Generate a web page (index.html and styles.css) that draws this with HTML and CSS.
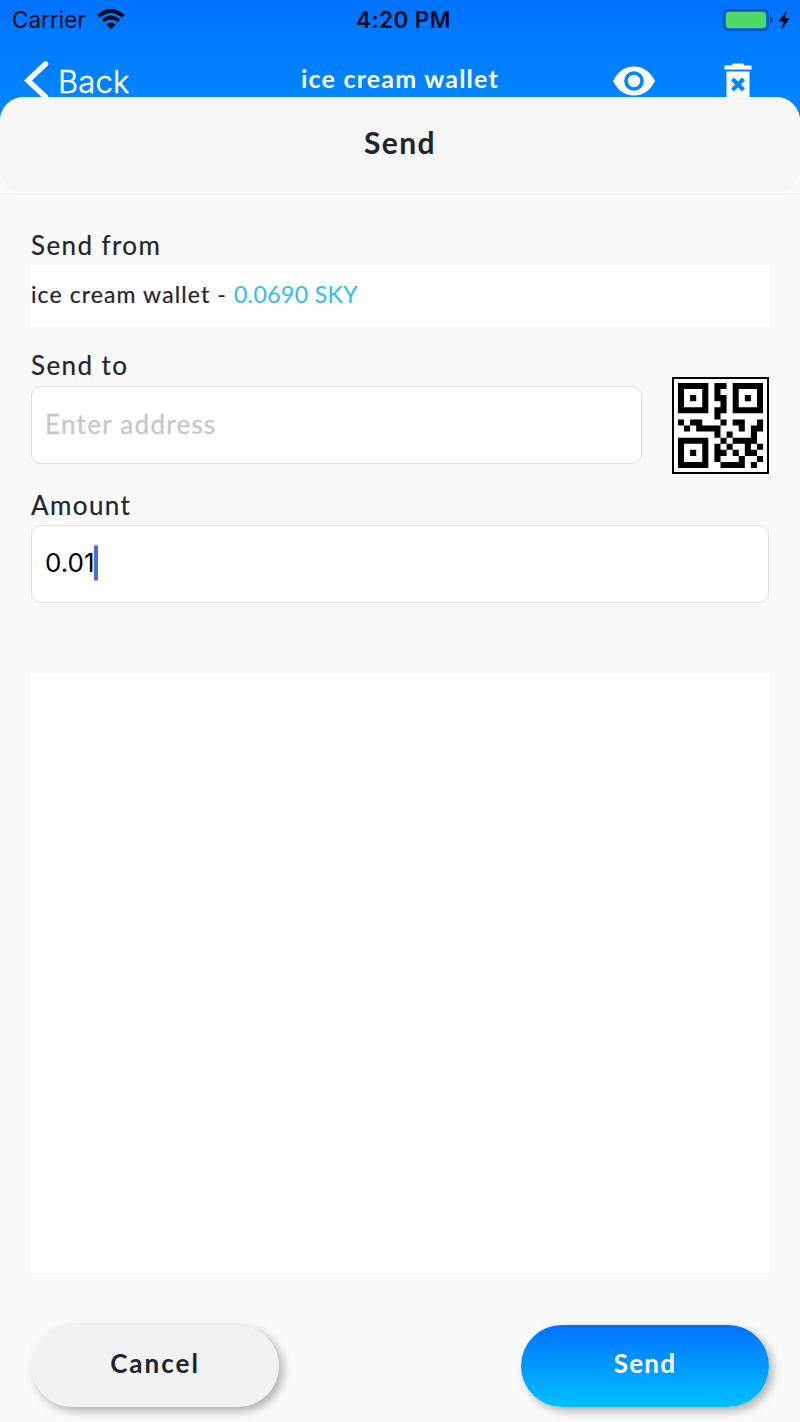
FILE: index.html
```html
<!doctype html>
<html lang="en">
<head>
<meta charset="utf-8">
<title>Send</title>
<link rel="stylesheet" href="styles.css">
</head>
<body>
<div class="screen">
    <header class="top">
        <div class="status">
            <div class="carrier">
                <span>Carrier</span>
                <svg width="28" height="21" viewBox="0 0 28 21">
                    <path d="M1.500 7.200Q14-3.600 26.500 7.200" fill="none" stroke="#000c20" stroke-width="4"/>
                    <path d="M6 12Q14 5 22 12" fill="none" stroke="#000c20" stroke-width="3.700"/>
                    <path d="M9.300 15.500Q14 11.300 18.700 15.500L14 20.200Z" fill="#000c20"/>
                </svg>
            </div>
            <div class="time">4:20 PM</div>
            <div class="battery">
                <div class="cell"></div>
                <svg width="26" height="22" viewBox="0 0 26 22">
                    <path d="M1 7.500Q4 8.500 4 11T1 14.500Z" fill="#0a4fa5"/>
                    <path d="M18 1L9.500 12.500H14.500L12 21L21 9H16Z" fill="#000c20"/>
                </svg>
            </div>
        </div>
        <nav class="nav">
            <a class="back" href="#">
                <svg width="26" height="42" viewBox="0 0 26 42">
                    <path d="M22.500 4L5 20.500L22.500 37" fill="none" stroke="#fff" stroke-width="5.500" stroke-linecap="round"/>
                </svg>
                <span>Back</span>
            </a>
            <h1>ice cream wallet</h1>
            <div class="tools">
                <svg width="44" height="30" viewBox="0 0 44 30">
                    <path d="M1 15C6 5 13.500.500 22 .500S38 5 43 15C38 25 30.500 29.500 22 29.500S6 25 1 15Z" fill="#fff"/>
                    <circle cx="22" cy="15" r="8" fill="none" stroke="#0085ff" stroke-width="3.600"/>
                </svg>
                <svg width="28" height="36" viewBox="0 0 28 36">
                    <path d="M.500 2.500H7.500L9 .500H19L20.500 2.500H27.500V6.500H.500ZM2.500 8.500H25.500V36H2.500Z" fill="#fff"/>
                    <path d="M8.500 16L19.500 27M19.500 16L8.500 27" stroke="#0085ff" stroke-width="4"/>
                </svg>
            </div>
        </nav>
    </header>

    <main class="sheet">
        <div class="sheet-title"><h2>Send</h2></div>
        <form class="form">
            <label>Send from</label>
            <div class="wallet">ice cream wallet - <span>0.0690 SKY</span></div>
            <label>Send to</label>
            <div class="row">
                <div class="field address">Enter address</div>
                <svg class="qr" viewBox="-.65 -.65 15.300 15.300">
                    <path fill="none" stroke="#000" d="M.500.500h4v4h-4zM9.500.500h4v4h-4zM.500 9.500h4v4h-4z"/>
                    <path d="M2 2h1v1h-1zM11 2h1v1h-1zM2 11h1v1h-1z
                        M6 0h2v1h-2zM6 1h1v1h-1zM6 2h2v1h-2zM7 3h1v1h-1zM6 4h2v1h-2zM6 5h1v1h-1z
                        M0 6h1v1h-1zM2 6h2v1h-2zM7 6h1v1h-1zM9 6h2v1h-2zM13 6h1v1h-1z
                        M1 7h1v1h-1zM3 7h4v1h-4zM10 7h1v1h-1zM12 7h2v1h-2z
                        M6 8h1v1h-1zM8 8h1v1h-1zM12 8h1v1h-1z
                        M7 9h1v1h-1zM9 9h4v1h-4z
                        M6 10h1v1h-1zM8 10h1v1h-1zM11 10h1v1h-1zM13 10h1v1h-1z
                        M6 11h2v1h-2zM9 11h1v1h-1zM11 11h2v1h-2z
                        M6 12h1v1h-1zM10 12h1v1h-1zM13 12h1v1h-1z
                        M7 13h4v1h-4zM12 13h1v1h-1z"/>
                </svg>
            </div>
            <label>Amount</label>
            <div class="field amount">0.01<i class="caret"></i></div>
        </form>
        <div class="notes"></div>
        <div class="buttons">
            <button class="btn cancel">Cancel</button>
            <button class="btn send">Send</button>
        </div>
    </main>
</div>
</body>
</html>
```

FILE: styles.css
```css
* { box-sizing: border-box; }
body {
    margin: 0;
    font-family: Lato, "Liberation Sans", sans-serif;
    color: #20242e;
}
h1, h2 { margin: 0; }
.screen {
    display: flex;
    flex-direction: column;
    height: 1422px;
    background: linear-gradient(#0073ff, #0089ff 120px);
}

/* status bar and nav, the sheet slides over the bottom of it */
.top { height: 97px; }
.status {
    display: grid;
    grid-template-columns: 1fr auto 1fr;
    align-items: center;
    height: 39px;
    padding: 0 5px 0 12px;
    font-family: Inter, sans-serif;
    font-size: 22.5px;
    color: #000c20;
}
.carrier {
    display: flex;
    align-items: center;
    gap: 11px;
}
.time {
    font-weight: 600;
    letter-spacing: 0.4px;
}
.battery {
    display: flex;
    align-items: center;
    justify-content: flex-end;
}
.cell {
    width: 46px;
    height: 22px;
    border: 2px solid #0a4fa5;
    border-radius: 6px;
    padding: 1px;
    background: #4cd964 content-box;
}
.nav {
    display: grid;
    grid-template-columns: 301px 1fr auto;
    align-items: center;
    height: 84px;
    padding: 0 48px 0 0;
    color: #fff;
}
.back {
    display: flex;
    align-items: center;
    gap: 9px;
    padding-left: 23px;
    font-family: Inter, sans-serif;
    font-size: 31px;
    line-height: 31px;
    font-weight: 300;
    letter-spacing: 0.2px;
    color: #fff;
    text-decoration: none;
    -webkit-text-stroke: 0.4px;
}
.nav h1 {
    font-size: 25px;
    letter-spacing: 1.2px;
    line-height: 30px;
    padding-bottom: 6px;
}
.tools {
    display: flex;
    align-items: center;
    gap: 68px;
}

/* sheet */
.sheet {
    flex: 1;
    display: flex;
    flex-direction: column;
    border-radius: 24px 24px 0 0;
    background: #fafafa;
}
.sheet-title {
    height: 98px;
    border-bottom: 2px solid #f4f4f4;
}
.sheet-title h2 {
    height: 96px;
    border-radius: 24px;
    background: #f6f6f6;
    font-size: 30px;
    letter-spacing: 1.4px;
    line-height: 91px;
    text-align: center;
}
.form {
    display: flex;
    flex-direction: column;
    padding: 33px 31px 0;
}
.form label {
    height: 37px;
    font-size: 26px;
    letter-spacing: 1.4px;
    line-height: 34px;
    -webkit-text-stroke: 0.2px;
}
.wallet {
    height: 61px;
    margin-bottom: 22px;
    background: #fff;
    font-size: 23px;
    letter-spacing: 1.1px;
    line-height: 59px;
    -webkit-text-stroke: 0.2px;
}
.wallet span {
    letter-spacing: 0.4px;
    color: #3bbfea;
}
.row {
    display: flex;
    align-items: center;
    justify-content: space-between;
    height: 78px;
    margin: 1px 0 24px;
}
.field {
    display: flex;
    align-items: center;
    height: 78px;
    padding: 0 13px 3px;
    border: 1px solid #e0e0e0;
    border-radius: 10px;
    background: #fff;
    font-size: 26px;
}
.address {
    width: 611px;
    letter-spacing: 1.3px;
    color: #c7c7cc;
    -webkit-text-stroke: 0.3px;
}
.amount {
    font-family: Inter, sans-serif;
    color: #000;
}
.caret {
    width: 4px;
    height: 36px;
    margin-left: -1px;
    border-radius: 2px;
    background: #4a6ee0;
}
.qr {
    width: 97px;
    height: 97px;
    border: 2px solid #000;
    background: #fff;
}
.notes {
    height: 599px;
    margin: 71px 31px 0;
    background: #fff;
}
.buttons {
    display: flex;
    justify-content: space-between;
    padding: 52px 31px 0;
}
.btn {
    width: 248px;
    height: 82px;
    padding: 0 0 7px;
    border: 0;
    border-radius: 41px;
    box-shadow: 4px 4px 10px rgba(0,0,0,.3);
    font: bold 26px Lato, sans-serif;
    letter-spacing: 1.3px;
}
.cancel {
    background: #f2f2f2;
    color: #20242e;
    letter-spacing: 2px;
}
.send {
    background: linear-gradient(#0072ff, #00c0ff);
    color: #fff;
}
```
